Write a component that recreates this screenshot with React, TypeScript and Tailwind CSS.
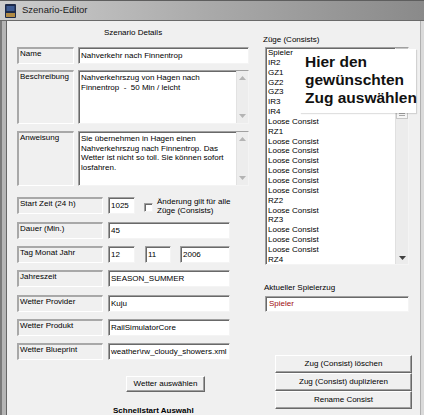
import React from "react";

const sunken =
  "bg-white border border-t-[#a0a0a0] border-l-[#a0a0a0] border-r-[#f4f4f4] border-b-[#f4f4f4] shadow-[inset_1px_1px_0_#696969]";
const labelBox =
  "border-t-2 border-l-2 border-t-[#a8a8a8] border-l-[#a8a8a8] border-b border-r border-b-white border-r-white pl-[1px] leading-[9px] whitespace-nowrap";
const raised =
  "bg-[#f0f0f0] border border-t-white border-l-white border-r-[#696969] border-b-[#696969] shadow-[inset_-1px_-1px_0_#a0a0a0] flex items-center justify-center";

const consists = [
  "Spieler", "IR2", "GZ1", "GZ2", "GZ3", "IR3", "IR4", "Loose Consist", "RZ1",
  "Loose Consist", "Loose Consist", "Loose Consist", "Loose Consist", "Loose Consist", "Loose Consist",
  "RZ2", "Loose Consist", "RZ3", "Loose Consist", "Loose Consist", "Loose Consist", "RZ4",
];

function Arrow({ up, color }: { up?: boolean; color: string }) {
  return (
    <svg width="7" height="4" viewBox="0 0 7 4">
      <polygon points={up ? "0,4 7,4 3.5,0" : "0,0 7,0 3.5,4"} fill={color} />
    </svg>
  );
}

// disabled scrollbar of the multi line edit fields
function EditScroll() {
  return (
    <div className="w-[12px] h-full bg-[#ededed] border-l border-l-[#e2e2e2] flex flex-col items-center justify-between py-[5px]">
      <Arrow up color="#b4b4b4" />
      <Arrow color="#b4b4b4" />
    </div>
  );
}

function Row({ label, className, children }: { label: string; className: string; children: React.ReactNode }) {
  return (
    <div className={`flex h-[17px] ${className}`}>
      <div className={`${labelBox} w-[86px]`}>{label}</div>
      <div className="ml-[5px] flex">{children}</div>
    </div>
  );
}

function TitleIcon() {
  return (
    <svg width="11" height="14" viewBox="0 0 11 14">
      <rect x="0" y="0" width="11" height="14" rx="1" fill="#1d2a4a" />
      <rect x="1.5" y="2" width="8" height="5" fill="#3d5a92" />
      <rect x="1" y="9" width="9" height="4" fill="#b08a45" />
    </svg>
  );
}

export default function App() {
  return (
    <div className="w-[424px] h-[415px] overflow-hidden font-['Liberation_Sans',Arial,sans-serif] text-[8px] text-black bg-[#f0f0f0]">
      {/* title bar */}
      <div className="h-[21px] flex items-center pl-[5px] bg-gradient-to-r from-[#cdcdcd] via-[#a9a9a9] to-[#8a8a8a] border-t border-t-[#5e5e5e] border-b border-b-[#6a6a6a]">
        <TitleIcon />
        <span className="ml-[6px] text-[9.5px] text-[#1a1a1a]">Szenario-Editor</span>
      </div>

      <div className="flex h-[394px]">
        <div className="w-[7px] shrink-0 bg-[#b5b5b5] border-l-2 border-l-[#7a7a7a] border-r border-r-[#666666]" />

        <div className="flex flex-1 overflow-hidden">
          {/* left column: Szenario Details */}
          <div className="w-[248px] shrink-0 pl-[10px] pt-[7px]">
            <div className="w-[232px] text-center leading-[10px]">Szenario Details</div>

            <div className="mt-[9px] flex h-[17px]">
              <div className={`${labelBox} w-[57px]`}>Name</div>
              <div className={`${sunken} ml-[4px] w-[171px] pl-[2px] flex items-center`}>Nahverkehr nach Finnentrop</div>
            </div>

            <div className="mt-[6px] flex h-[54px]">
              <div className={`${labelBox} w-[57px]`}>Beschreibung</div>
              <div className={`${sunken} ml-[4px] w-[171px] flex`}>
                <div className="flex-1 pl-[2px] pt-[2px] leading-[10px] whitespace-pre">
                  {"Nahverkehrszug von Hagen nach\nFinnentrop  -  50 Min / leicht"}
                </div>
                <EditScroll />
              </div>
            </div>

            <div className="mt-[7px] flex h-[55px]">
              <div className={`${labelBox} w-[57px]`}>Anweisung</div>
              <div className={`${sunken} ml-[4px] w-[171px] flex`}>
                <div className="flex-1 pl-[2px] pt-[2px] leading-[9.6px] whitespace-pre">
                  {"Sie übernehmen in Hagen einen\nNahverkehrszug nach Finnentrop. Das\nWetter ist nicht so toll. Sie können sofort\nlosfahren."}
                </div>
                <EditScroll />
              </div>
            </div>

            <Row label="Start Zeit (24 h)" className="mt-[11px]">
              <div className={`${sunken} w-[27px] pl-[2px] flex items-center`}>1025</div>
              <div className={`${sunken} ml-[9px] mt-[6px] w-[9px] h-[9px]`} />
              <div className="ml-[4px] leading-[9px] whitespace-nowrap">
                Änderung gilt für alle
                <br />
                Züge (Consists)
              </div>
            </Row>
            <Row label="Dauer (Min.)" className="mt-[8px]">
              <div className={`${sunken} w-[122px] pl-[2px] flex items-center`}>45</div>
            </Row>
            <Row label="Tag Monat Jahr" className="mt-[7px]">
              <div className={`${sunken} w-[27px] pl-[2px] flex items-center`}>12</div>
              <div className={`${sunken} ml-[10px] w-[26px] pl-[2px] flex items-center`}>11</div>
              <div className={`${sunken} ml-[9px] w-[50px] pl-[2px] flex items-center`}>2006</div>
            </Row>
            <Row label="Jahreszeit" className="mt-[7px]">
              <div className={`${sunken} w-[122px] pl-[2px] flex items-center`}>SEASON_SUMMER</div>
            </Row>
            <Row label="Wetter Provider" className="mt-[8px]">
              <div className={`${sunken} w-[122px] pl-[2px] flex items-center`}>Kuju</div>
            </Row>
            <Row label="Wetter Produkt" className="mt-[7px]">
              <div className={`${sunken} w-[122px] pl-[2px] flex items-center`}>RailSimulatorCore</div>
            </Row>
            <Row label="Wetter Blueprint" className="mt-[7px]">
              <div className={`${sunken} w-[122px] pl-[2px] flex items-center whitespace-nowrap`}>weather\rw_cloudy_showers.xml</div>
            </Row>

            <div className={`${raised} mt-[16px] ml-[109px] w-[79px] h-[16px]`}>Wetter auswählen</div>
            <div className="mt-[14px] ml-[96px] font-bold leading-[10px]">Schnellstart Auswahl</div>
          </div>

          {/* right column: consists */}
          <div className="relative w-[165px] shrink-0 pt-[14px]">
            <div className="pl-[8px] leading-[10px]">Züge (Consists)</div>
            <div className={`${sunken} ml-[10px] mt-[2px] w-[144px] h-[218px] flex`}>
              <div className="flex-1 pl-[2px] leading-[9.85px] overflow-hidden">
                {consists.map((c, i) => (
                  <div key={i}>{c}</div>
                ))}
              </div>
              <div className="w-[13px] h-full bg-[#ececec] border-l border-l-[#e0e0e0] flex flex-col">
                <div className="h-[71px] bg-[#f6f6f6] border border-[#c6c6c6] flex flex-col justify-end items-center pb-[2px] gap-[1px]">
                  <div className="w-[6px] h-px bg-[#a8a8a8]" />
                  <div className="w-[6px] h-px bg-[#a8a8a8]" />
                </div>
                <div className="flex-1" />
                <div className="h-[12px] flex items-center justify-center">
                  <Arrow color="#404040" />
                </div>
              </div>
            </div>

            <div className="pl-[9px] mt-[18px] leading-[10px]">Aktueller Spielerzug</div>
            <div className={`${sunken} ml-[10px] mt-[3px] w-[144px] h-[16px] pl-[3px] flex items-center text-[#9e0b0f]`}>Spieler</div>

            <div className="ml-[20px] mt-[43px] w-[137px] flex flex-col">
              <div className={`${raised} h-[18px]`}>Zug (Consist) löschen</div>
              <div className={`${raised} h-[18px]`}>Zug (Consist) duplizieren</div>
              <div className={`${raised} h-[18px]`}>Rename Consist</div>
            </div>

            {/* pasted hint */}
            <div className="absolute left-[45px] top-[28px] w-[116px] h-[64px] bg-white shadow-[1px_1px_1px_rgba(0,0,0,0.12)] pl-[5px] pt-[4px] text-[15.5px] leading-[18px] font-bold text-[#111111] whitespace-nowrap">
              Hier den
              <br />
              gewünschten
              <br />
              Zug auswählen
            </div>
          </div>
        </div>

        <div className="w-[4px] shrink-0 bg-[#dadada] border-l border-l-[#b0b0b0]" />
      </div>
    </div>
  );
}
